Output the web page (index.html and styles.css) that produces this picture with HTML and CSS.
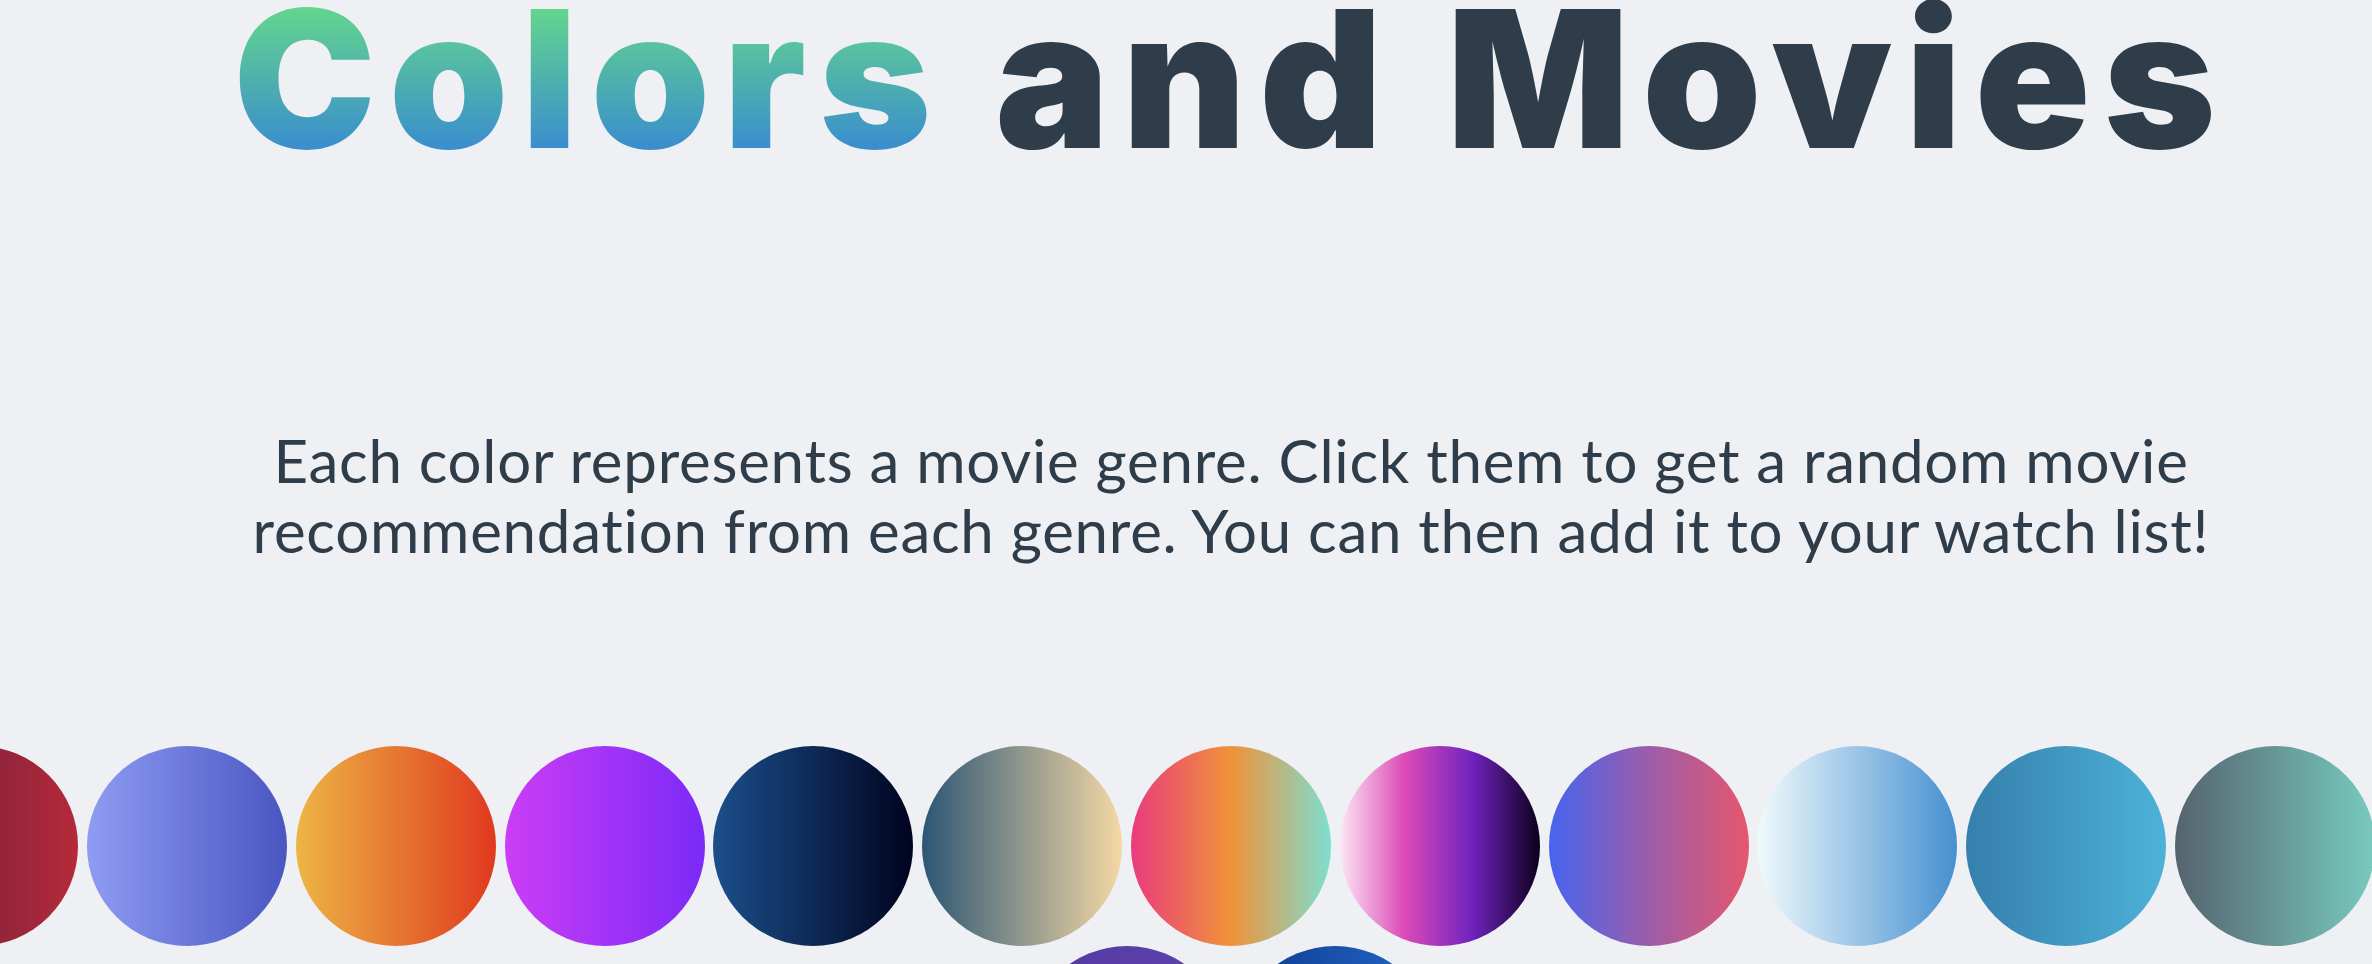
FILE: index.html
```html
<!DOCTYPE html>
<html lang="en">
<head>
<meta charset="utf-8">
<title>Colors and Movies</title>
<link rel="stylesheet" href="styles.css">
</head>
<body>
<main class="page">
  <h1 class="title"><span class="grad">Colors</span> and Movies</h1>
  <p class="intro">Each color represents a movie genre. Click them to get a random movie recommendation from each genre. You can then add it to your watch list!</p>
  <div class="genres">
    <button class="genre g1" aria-label="Genre 1"></button>
    <button class="genre g2" aria-label="Genre 2"></button>
    <button class="genre g3" aria-label="Genre 3"></button>
    <button class="genre g4" aria-label="Genre 4"></button>
    <button class="genre g5" aria-label="Genre 5"></button>
    <button class="genre g6" aria-label="Genre 6"></button>
    <button class="genre g7" aria-label="Genre 7"></button>
    <button class="genre g8" aria-label="Genre 8"></button>
    <button class="genre g9" aria-label="Genre 9"></button>
    <button class="genre g10" aria-label="Genre 10"></button>
    <button class="genre g11" aria-label="Genre 11"></button>
    <button class="genre g12" aria-label="Genre 12"></button>
    <button class="genre g13" aria-label="Genre 13"></button>
    <button class="genre g14" aria-label="Genre 14"></button>
    <button class="genre g15" aria-label="Genre 15"></button>
  </div>
</main>
</body>
</html>
```

FILE: styles.css
```css
html, body {
  margin: 0;
  padding: 0;
  background: #eef0f3;
  overflow: hidden;
}

.page {
  width: 2718px;
  margin-left: -128px;
  display: flex;
  flex-direction: column;
  align-items: center;
}

.title {
  font-family: "Inter", "DejaVu Sans", sans-serif;
  font-weight: 900;
  font-size: 191px;
  line-height: 1;
  letter-spacing: 13px;
  margin: -17px 0 0;
  color: #2e3d49;
  white-space: nowrap;
}

.grad {
  background: linear-gradient(180deg, #66d98a 37px, #3a8ecd 185px);
  -webkit-background-clip: text;
  background-clip: text;
  color: transparent;
}

.intro {
  font-family: "Lato", "Liberation Sans", sans-serif;
  font-weight: 400;
  font-size: 60px;
  line-height: 70px;
  letter-spacing: 0.75px;
  color: #2e3d49;
  text-align: center;
  max-width: 1995px;
  margin: 251px 0 0;
}

.genres {
  display: flex;
  flex-wrap: wrap;
  justify-content: center;
  width: 100%;
  margin-top: 181px;
}

.genre {
  width: 200px;
  height: 200px;
  margin: 0 4.4px;
  padding: 0;
  border: 0;
  border-radius: 50%;
  cursor: pointer;
}

.g1 { background: linear-gradient(90deg, #5f1b3d, #b52a39); }
.g2 { background: linear-gradient(90deg, #8e9cf3, #4a56c1); }
.g3 { background: linear-gradient(90deg, #edb545, #e0391f); }
.g4 { background: linear-gradient(90deg, #cc3df6, #7b2af7); }
.g5 { background: linear-gradient(90deg, #1b4f8b, #00031f); }
.g6 { background: linear-gradient(90deg, #2c5674, #f5d8a5); }
.g7 { background: linear-gradient(90deg, #e93b7d, #f0923a 50%, #7ddfcf); }
.g8 { background: linear-gradient(90deg, #fbe6f3, #dd4bb8 32%, #7022be 66%, #0c001c); }
.g9 { background: linear-gradient(90deg, #4664ef, #9c5daa 50%, #e5576d); }
.g10 { background: linear-gradient(90deg, #f0fafc, #4690d0); }
.g11 { background: linear-gradient(90deg, #367fac, #4db2d8); }
.g12 { background: linear-gradient(90deg, #55636f, #78cabf); }
.g13 { background: linear-gradient(90deg, #f2994a, #f2c94c); }
.g14 { background: linear-gradient(90deg, #5339a3, #5f43ac); }
.g15 { background: linear-gradient(90deg, #0f3a8e, #2267c9); }
```
